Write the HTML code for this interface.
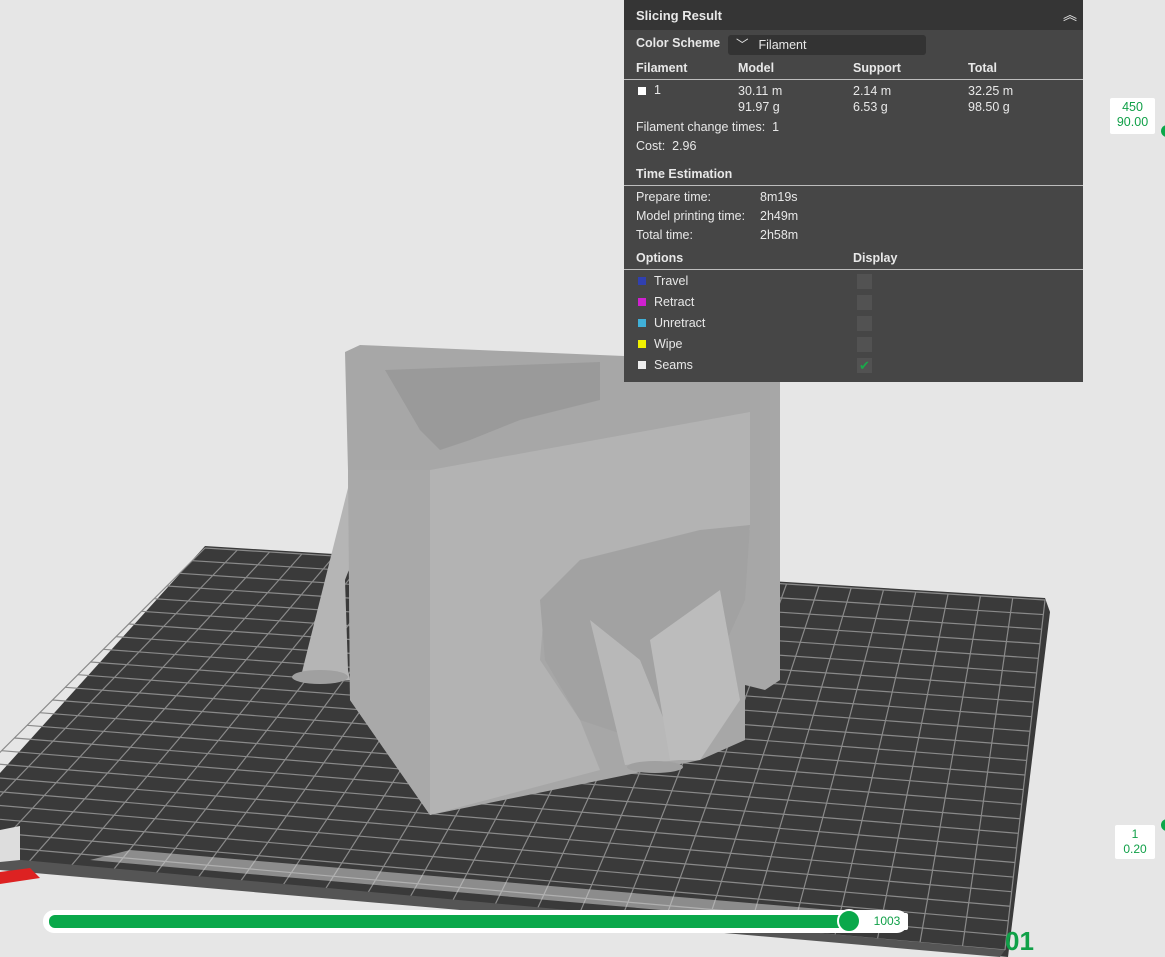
<!DOCTYPE html>
<html><head><meta charset="utf-8"><style>
body{margin:0;width:1165px;height:957px;overflow:hidden;background:#e6e6e6;font-family:"Liberation Sans","DejaVu Sans",sans-serif;position:relative}
#panel{position:absolute;left:624px;top:0;width:459px;height:382px;background:#464646;color:#e8e8e8;font-size:12.5px}
.hd{height:30px;background:#353535;font-weight:bold;font-size:13px;line-height:31px;padding-left:12px;position:relative}
.b{font-weight:bold}
.ab{position:absolute}
.line{position:absolute;left:0;width:459px;height:1px;background:#bdbdbd}
.sq{position:absolute;width:8px;height:8px}
.cb{position:absolute;left:233px;width:15px;height:15px;background:#525252}
.lbl{position:absolute;background:#fff;color:#10a048;font-size:12px;text-align:center;line-height:15px;border-radius:2px}
</style></head><body>
<svg id="s" width="1165" height="957" style="position:absolute;left:0;top:0">
<polygon points="205,546 1045,598 1050,612 1008,957 0,868 0,773" fill="#3a3a3a"/>
<g id="grid" stroke="#8a8a8a" stroke-width="1.2"></g>
<polygon points="0,858 0,870 1000,957 1005,950" fill="#555"/>
<polygon points="90,860 130,850 890,915 890,930" fill="#cfcfcf" opacity=".55"/>
<polygon points="0,872 30,868 40,878 0,884" fill="#d22"/>
<polygon points="0,830 20,826 20,860 0,862" fill="#ddd"/>
<!-- model -->
<polygon points="345,352 360,345 600,355 770,362 780,380 780,680 765,690 745,685 745,740 700,760 430,815 350,700 348,470" fill="#a7a7a7"/>
<polygon points="385,370 600,362 600,400 520,420 470,440 440,450 420,430" fill="#9a9a9a"/>
<polygon points="430,470 750,412 750,530 700,540 640,550 580,570 545,600 540,660 580,720 600,770 430,815" fill="#b3b3b3"/>
<polygon points="540,600 580,560 700,530 750,525 745,600 700,700 640,740 580,720 545,660" fill="#a2a2a2"/>
<polygon points="590,620 640,660 680,760 625,765" fill="#b8b8b8"/>
<polygon points="650,640 720,590 740,700 700,760 670,760" fill="#bcbcbc"/>
<polygon points="350,480 365,470 372,510 345,580 348,670 350,680 300,680 320,600" fill="#b5b5b5"/>
<ellipse cx="320" cy="677" rx="28" ry="7" fill="#a0a0a0"/>
<ellipse cx="655" cy="767" rx="28" ry="6" fill="#a0a0a0"/>
<polygon points="350,700 430,815 430,470 348,470" fill="#a9a9a9"/>
<!-- slider -->
<rect x="43" y="910" width="865" height="23" rx="11" fill="#fff"/>
<rect x="49" y="915" width="800" height="13" rx="6" fill="#0aa84a"/>
<circle cx="849" cy="921" r="11" fill="#0aa84a" stroke="#fff" stroke-width="2"/>
<text x="1005" y="950" font-family="Liberation Sans" font-weight="bold" font-size="26" fill="#10a048">01</text>
<circle cx="1167" cy="131" r="6" fill="#0aa84a"/>
<circle cx="1167" cy="825" r="6" fill="#0aa84a"/>
</svg>
<div class="lbl" style="left:866px;top:913px;width:42px;height:17px;line-height:17px">1003</div>
<div class="lbl" style="left:1110px;top:98px;width:45px;height:34px;font-size:12.5px;line-height:15px;padding-top:2px">450<br>90.00</div>
<div class="lbl" style="left:1115px;top:825px;width:40px;height:32px;line-height:15px;padding-top:2px">1<br>0.20</div>
<div id="panel">
<div class="hd">Slicing Result<span class="ab" style="right:6px;top:0;font-size:14px;font-weight:normal">︽</span></div>
<div class="ab b" style="left:12px;top:36px">Color Scheme</div>
<div class="ab" style="left:104px;top:35px;width:198px;height:20px;background:#333;border-radius:3px;line-height:20px;padding-left:0"><span style="margin-left:8px">﹀</span><span style="margin-left:10px">Filament</span></div>
<div class="ab b" style="left:12px;top:61px">Filament</div>
<div class="ab b" style="left:114px;top:61px">Model</div>
<div class="ab b" style="left:229px;top:61px">Support</div>
<div class="ab b" style="left:344px;top:61px">Total</div>
<div class="line" style="top:79px"></div>
<div class="sq" style="left:14px;top:87px;background:#fff"></div>
<div class="ab" style="left:30px;top:83px">1</div>
<div class="ab" style="left:114px;top:83px;line-height:16px">30.11 m<br>91.97 g</div>
<div class="ab" style="left:229px;top:83px;line-height:16px">2.14 m<br>6.53 g</div>
<div class="ab" style="left:344px;top:83px;line-height:16px">32.25 m<br>98.50 g</div>
<div class="ab" style="left:12px;top:120px">Filament change times:&nbsp; 1</div>
<div class="ab" style="left:12px;top:139px">Cost:&nbsp; 2.96</div>
<div class="ab b" style="left:12px;top:167px">Time Estimation</div>
<div class="line" style="top:185px"></div>
<div class="ab" style="left:12px;top:190px">Prepare time:</div><div class="ab" style="left:136px;top:190px">8m19s</div>
<div class="ab" style="left:12px;top:209px">Model printing time:</div><div class="ab" style="left:136px;top:209px">2h49m</div>
<div class="ab" style="left:12px;top:228px">Total time:</div><div class="ab" style="left:136px;top:228px">2h58m</div>
<div class="ab b" style="left:12px;top:251px">Options</div>
<div class="ab b" style="left:229px;top:251px">Display</div>
<div class="line" style="top:269px"></div>
<div class="sq" style="left:14px;top:277px;background:#3040b0"></div><div class="ab" style="left:30px;top:274px">Travel</div><div class="cb" style="top:274px"></div>
<div class="sq" style="left:14px;top:298px;background:#d020d0"></div><div class="ab" style="left:30px;top:295px">Retract</div><div class="cb" style="top:295px"></div>
<div class="sq" style="left:14px;top:319px;background:#40b0d8"></div><div class="ab" style="left:30px;top:316px">Unretract</div><div class="cb" style="top:316px"></div>
<div class="sq" style="left:14px;top:340px;background:#f0f000"></div><div class="ab" style="left:30px;top:337px">Wipe</div><div class="cb" style="top:337px"></div>
<div class="sq" style="left:14px;top:361px;background:#eee"></div><div class="ab" style="left:30px;top:358px">Seams</div><div class="cb" style="top:358px;color:#1aa84a;font-size:13px;line-height:15px;text-align:center">✔</div>
</div>
<script>
var A=[205,548],B=[1045,600],C=[1005,950],D=[-100,852];
function P(u,v){var x=(1-u)*(1-v)*A[0]+u*(1-v)*B[0]+u*v*C[0]+(1-u)*v*D[0];var y=(1-u)*(1-v)*A[1]+u*(1-v)*B[1]+u*v*C[1]+(1-u)*v*D[1];return [x,y];}
var g=document.getElementById('grid'),h='';
var nu=26,nv=24;
for(var i=0;i<=nu;i++){var a=P(i/nu,0),b=P(i/nu,1);h+='<line x1="'+a[0]+'" y1="'+a[1]+'" x2="'+b[0]+'" y2="'+b[1]+'"/>';}
for(var j=0;j<=nv;j++){var a=P(0,j/nv),b=P(1,j/nv);h+='<line x1="'+a[0]+'" y1="'+a[1]+'" x2="'+b[0]+'" y2="'+b[1]+'"/>';}
g.innerHTML=h;
</script>
</body></html>
